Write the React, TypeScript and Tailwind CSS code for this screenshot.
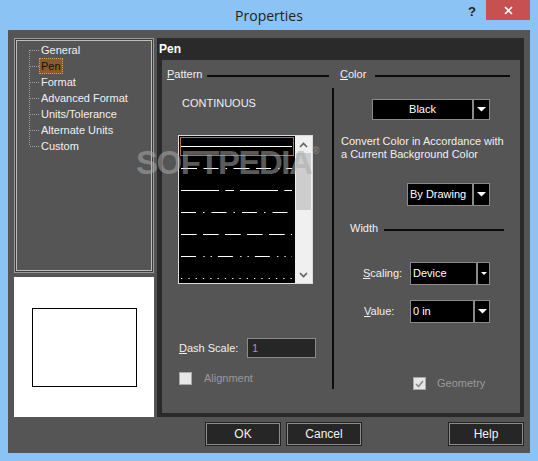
import React from 'react';

const tree = ['General', 'Pen', 'Format', 'Advanced Format', 'Units/Tolerance', 'Alternate Units', 'Custom'];

function Arrow({ small }: { small?: boolean }) {
  return small ? (
    <svg width="6" height="4" viewBox="0 0 6 4">
      <polygon points="0,0 6,0 3,3" fill="#fff" />
    </svg>
  ) : (
    <svg width="9" height="5" viewBox="0 0 9 5">
      <polygon points="0,0 9,0 4.5,4.5" fill="#fff" />
    </svg>
  );
}

function Connector({ first, last }: { first: boolean; last: boolean }) {
  return (
    <svg width="10" height="16" className="shrink-0">
      <line x1="0.5" y1={first ? 8 : 0} x2="0.5" y2={last ? 8 : 16} stroke="#a0a0a0" strokeDasharray="1 1" />
      <line x1="1" y1="8.5" x2="10" y2="8.5" stroke="#a0a0a0" strokeDasharray="1 1" />
    </svg>
  );
}

function Check({ checked }: { checked?: boolean }) {
  return (
    <div className="w-[13px] h-[13px] border border-[#a8a8a8] bg-[#e6e6e6] flex items-center justify-center shrink-0">
      {checked && (
        <svg width="9" height="8" viewBox="0 0 9 8">
          <polyline points="1,4 3.5,6.5 8,1" fill="none" stroke="#8a8a8a" strokeWidth="1.6" />
        </svg>
      )}
    </div>
  );
}

function Chevron({ down }: { down?: boolean }) {
  return (
    <div className="h-[17px] flex items-center justify-center">
      <svg width="9" height="6" viewBox="0 0 9 6">
        <polyline points={down ? '1,1 4.5,4.5 8,1' : '1,5 4.5,1.5 8,5'} fill="none" stroke="#606060" strokeWidth="1.6" />
      </svg>
    </div>
  );
}

const patterns = ['16 6.5 15 7 1.5 6.5', '38 6.3 8.7 6', '15 7 1.5 7', '15.7 6.3', '15 7.3 1.3 6 1.3 6', '1.3 6'];

function Btn({ label, className = '' }: { label: string; className?: string }) {
  return (
    <button className={`w-[74px] h-[22px] bg-[#262626] border border-[#8c8c8c] shadow-[0_0_0_1px_#222] text-[#f2f2f2] text-[12px] ${className}`}>
      {label}
    </button>
  );
}

export default function App() {
  return (
    <div className="w-[538px] h-[461px] bg-[#8bc4f4] flex flex-col relative overflow-hidden font-['Liberation_Sans',Arial,sans-serif] text-[11px] text-[#f0f0f0]">
      {/* title bar */}
      <div className="h-[30px] shrink-0 relative flex items-center justify-center">
        <span className="font-['Open_Sans',sans-serif] text-[14px] text-[#222]">Properties</span>
        <div className="absolute right-[8px] top-0 flex items-start">
          <span className="text-[13px] font-bold text-[#222] mr-[10px] mt-[2px]">?</span>
          <div className="w-[44px] h-[20px] bg-[#c75050] flex items-center justify-center">
            <svg width="9" height="9" viewBox="0 0 9 9">
              <path d="M1 1L8 8M8 1L1 8" stroke="#fff" strokeWidth="1.6" />
            </svg>
          </div>
        </div>
      </div>

      {/* dialog body */}
      <div className="mx-[8px] h-[423px] bg-[#555] pt-[8px] pl-[6px] flex flex-col">
        <div className="flex gap-[3px]">
          {/* left column */}
          <div className="w-[140px] flex flex-col gap-[4px]">
            <div className="h-[235px] border border-[#9a9a9a] p-[1px] bg-[#3c3c3c]">
              <div className="h-full border border-[#bdbdbd] bg-[#555] pl-[12px] pt-[1px]">
                {tree.map((t, i) => (
                  <div key={t} className="h-[16px] flex items-center">
                    <Connector first={i === 0} last={i === tree.length - 1} />
                    {t === 'Pen' ? (
                      <span className="px-[1px] h-[16px] leading-[14px] bg-[#8a5a28] border border-dotted border-[#d0a060] text-[#111]">
                        {t}
                      </span>
                    ) : (
                      <span className="ml-[2px]">{t}</span>
                    )}
                  </div>
                ))}
              </div>
            </div>
            <div className="h-[140px] bg-white pt-[31px] pl-[18px]">
              <div className="w-[105px] h-[79px] border-[1.5px] border-black" />
            </div>
          </div>

          {/* right panel */}
          <div className="w-[367px] h-[379px] bg-[#2a2a2a] flex flex-col">
            <div className="h-[22px] flex items-center pl-[2px] font-bold text-[12px] text-white">Pen</div>
            <div className="flex-1 ml-[5px] mr-[4px] mb-[4px] bg-[#555]">
              {/* group headers */}
              <div className="mt-[7px] h-[14px] flex items-center">
                <span className="ml-[5px] w-[40px]"><u>P</u>attern</span>
                <div className="w-[122px] h-[2px] bg-[#0c0c0c] mt-[3px]" />
                <span className="ml-[11px] w-[35px]"><u>C</u>olor</span>
                <div className="w-[135px] h-[2px] bg-[#0c0c0c] mt-[3px]" />
              </div>

              <div className="flex">
                {/* pattern column */}
                <div className="w-[170px] flex flex-col">
                  <div className="mt-[16px] ml-[20px] leading-[13px]">CONTINUOUS</div>
                  <div className="mt-[25px] ml-[16px] w-[135px] h-[149px] border border-[#dcdcdc] flex">
                    <div className="w-[116px] h-full bg-black">
                      <svg width="116" height="147">
                        <rect x="1.5" y="1.5" width="113" height="18" fill="none" stroke="#b4763a" />
                        <line x1="2" y1="10.5" x2="113" y2="10.5" stroke="#fff" />
                        {patterns.map((d, i) => (
                          <line key={i} x1="2" y1={32.5 + i * 22} x2="113" y2={32.5 + i * 22} stroke="#fff" strokeDasharray={d} />
                        ))}
                      </svg>
                    </div>
                    <div className="w-[17px] h-full bg-[#f0f0f0] flex flex-col">
                      <Chevron />
                      <div className="h-[57px] mx-[1px] bg-[#cdcdcd]" />
                      <div className="flex-1" />
                      <Chevron down />
                    </div>
                  </div>
                  <div className="mt-[54px] ml-[17px] h-[20px] flex items-center">
                    <span className="w-[68px]"><u>D</u>ash Scale:</span>
                    <div className="w-[69px] h-[20px] bg-[#262626] border border-[#8a8a8a] pl-[4px] flex items-center text-[#9a9a9a]">1</div>
                  </div>
                  <div className="mt-[14px] ml-[17px] h-[13px] flex items-center">
                    <Check />
                    <span className="ml-[12px] text-[#9a9a9a]">Alignment</span>
                  </div>
                </div>

                <div className="w-[2px] h-[301px] mt-[7px] bg-[#0c0c0c]" />

                {/* color column */}
                <div className="flex-1 flex flex-col">
                  <div className="mt-[18px] ml-[38px] h-[21px] w-[118px] flex">
                    <div className="w-[101px] h-full bg-black border border-[#8a8a8a] flex items-center justify-center text-white">Black</div>
                    <div className="w-[17px] h-full bg-black border border-[#8a8a8a] flex items-center justify-center"><Arrow /></div>
                  </div>
                  <div className="mt-[15px] ml-[7px] leading-[13px]">
                    Convert Color in Accordance with
                    <br />a Current Background Color
                  </div>
                  <div className="mt-[22px] ml-[73px] h-[23px] w-[83px] flex">
                    <div className="w-[66px] h-full bg-black border border-[#8a8a8a] flex items-center pl-[2px] text-white">By Drawing</div>
                    <div className="w-[17px] h-full bg-black border border-[#8a8a8a] flex items-center justify-center"><Arrow /></div>
                  </div>
                  <div className="mt-[15px] h-[14px] flex items-center">
                    <span className="ml-[16px] w-[34px]">Width</span>
                    <div className="w-[120px] h-[2px] bg-[#0c0c0c] mt-[3px]" />
                  </div>
                  <div className="mt-[27px] h-[23px] flex items-center">
                    <span className="ml-[29px] w-[47px]"><u>S</u>caling:</span>
                    <div className="w-[80px] h-full flex">
                      <div className="w-[67px] h-full bg-black border border-[#8a8a8a] flex items-center pl-[2px] text-white">Device</div>
                      <div className="w-[13px] h-full bg-black border border-[#8a8a8a] flex items-center justify-center"><Arrow small /></div>
                    </div>
                  </div>
                  <div className="mt-[15px] h-[23px] flex items-center">
                    <span className="ml-[30px] w-[46px]"><u>V</u>alue:</span>
                    <div className="w-[80px] h-full flex">
                      <div className="w-[64px] h-full bg-black border border-[#8a8a8a] flex items-center pl-[2px] text-white">0 in</div>
                      <div className="w-[16px] h-full bg-black border border-[#8a8a8a] flex items-center justify-center"><Arrow /></div>
                    </div>
                  </div>
                  <div className="mt-[54px] ml-[79px] h-[13px] flex items-center">
                    <Check checked />
                    <span className="ml-[11px] text-[#9a9a9a]">Geometry</span>
                  </div>
                </div>
              </div>
            </div>
          </div>
        </div>

        {/* buttons */}
        <div className="mt-[6px] h-[22px] flex">
          <Btn label="OK" className="ml-[192px]" />
          <Btn label="Cancel" className="ml-[7px]" />
          <Btn label="Help" className="ml-[88px]" />
        </div>
      </div>

      {/* watermark */}
      <div className="absolute left-[136px] top-[146px] pointer-events-none font-bold text-[33px] leading-none tracking-[-1.5px] text-[rgba(170,170,170,0.55)]">
        SOFTPEDIA<span className="text-[10px] align-top ml-[1px]">®</span>
      </div>
    </div>
  );
}
